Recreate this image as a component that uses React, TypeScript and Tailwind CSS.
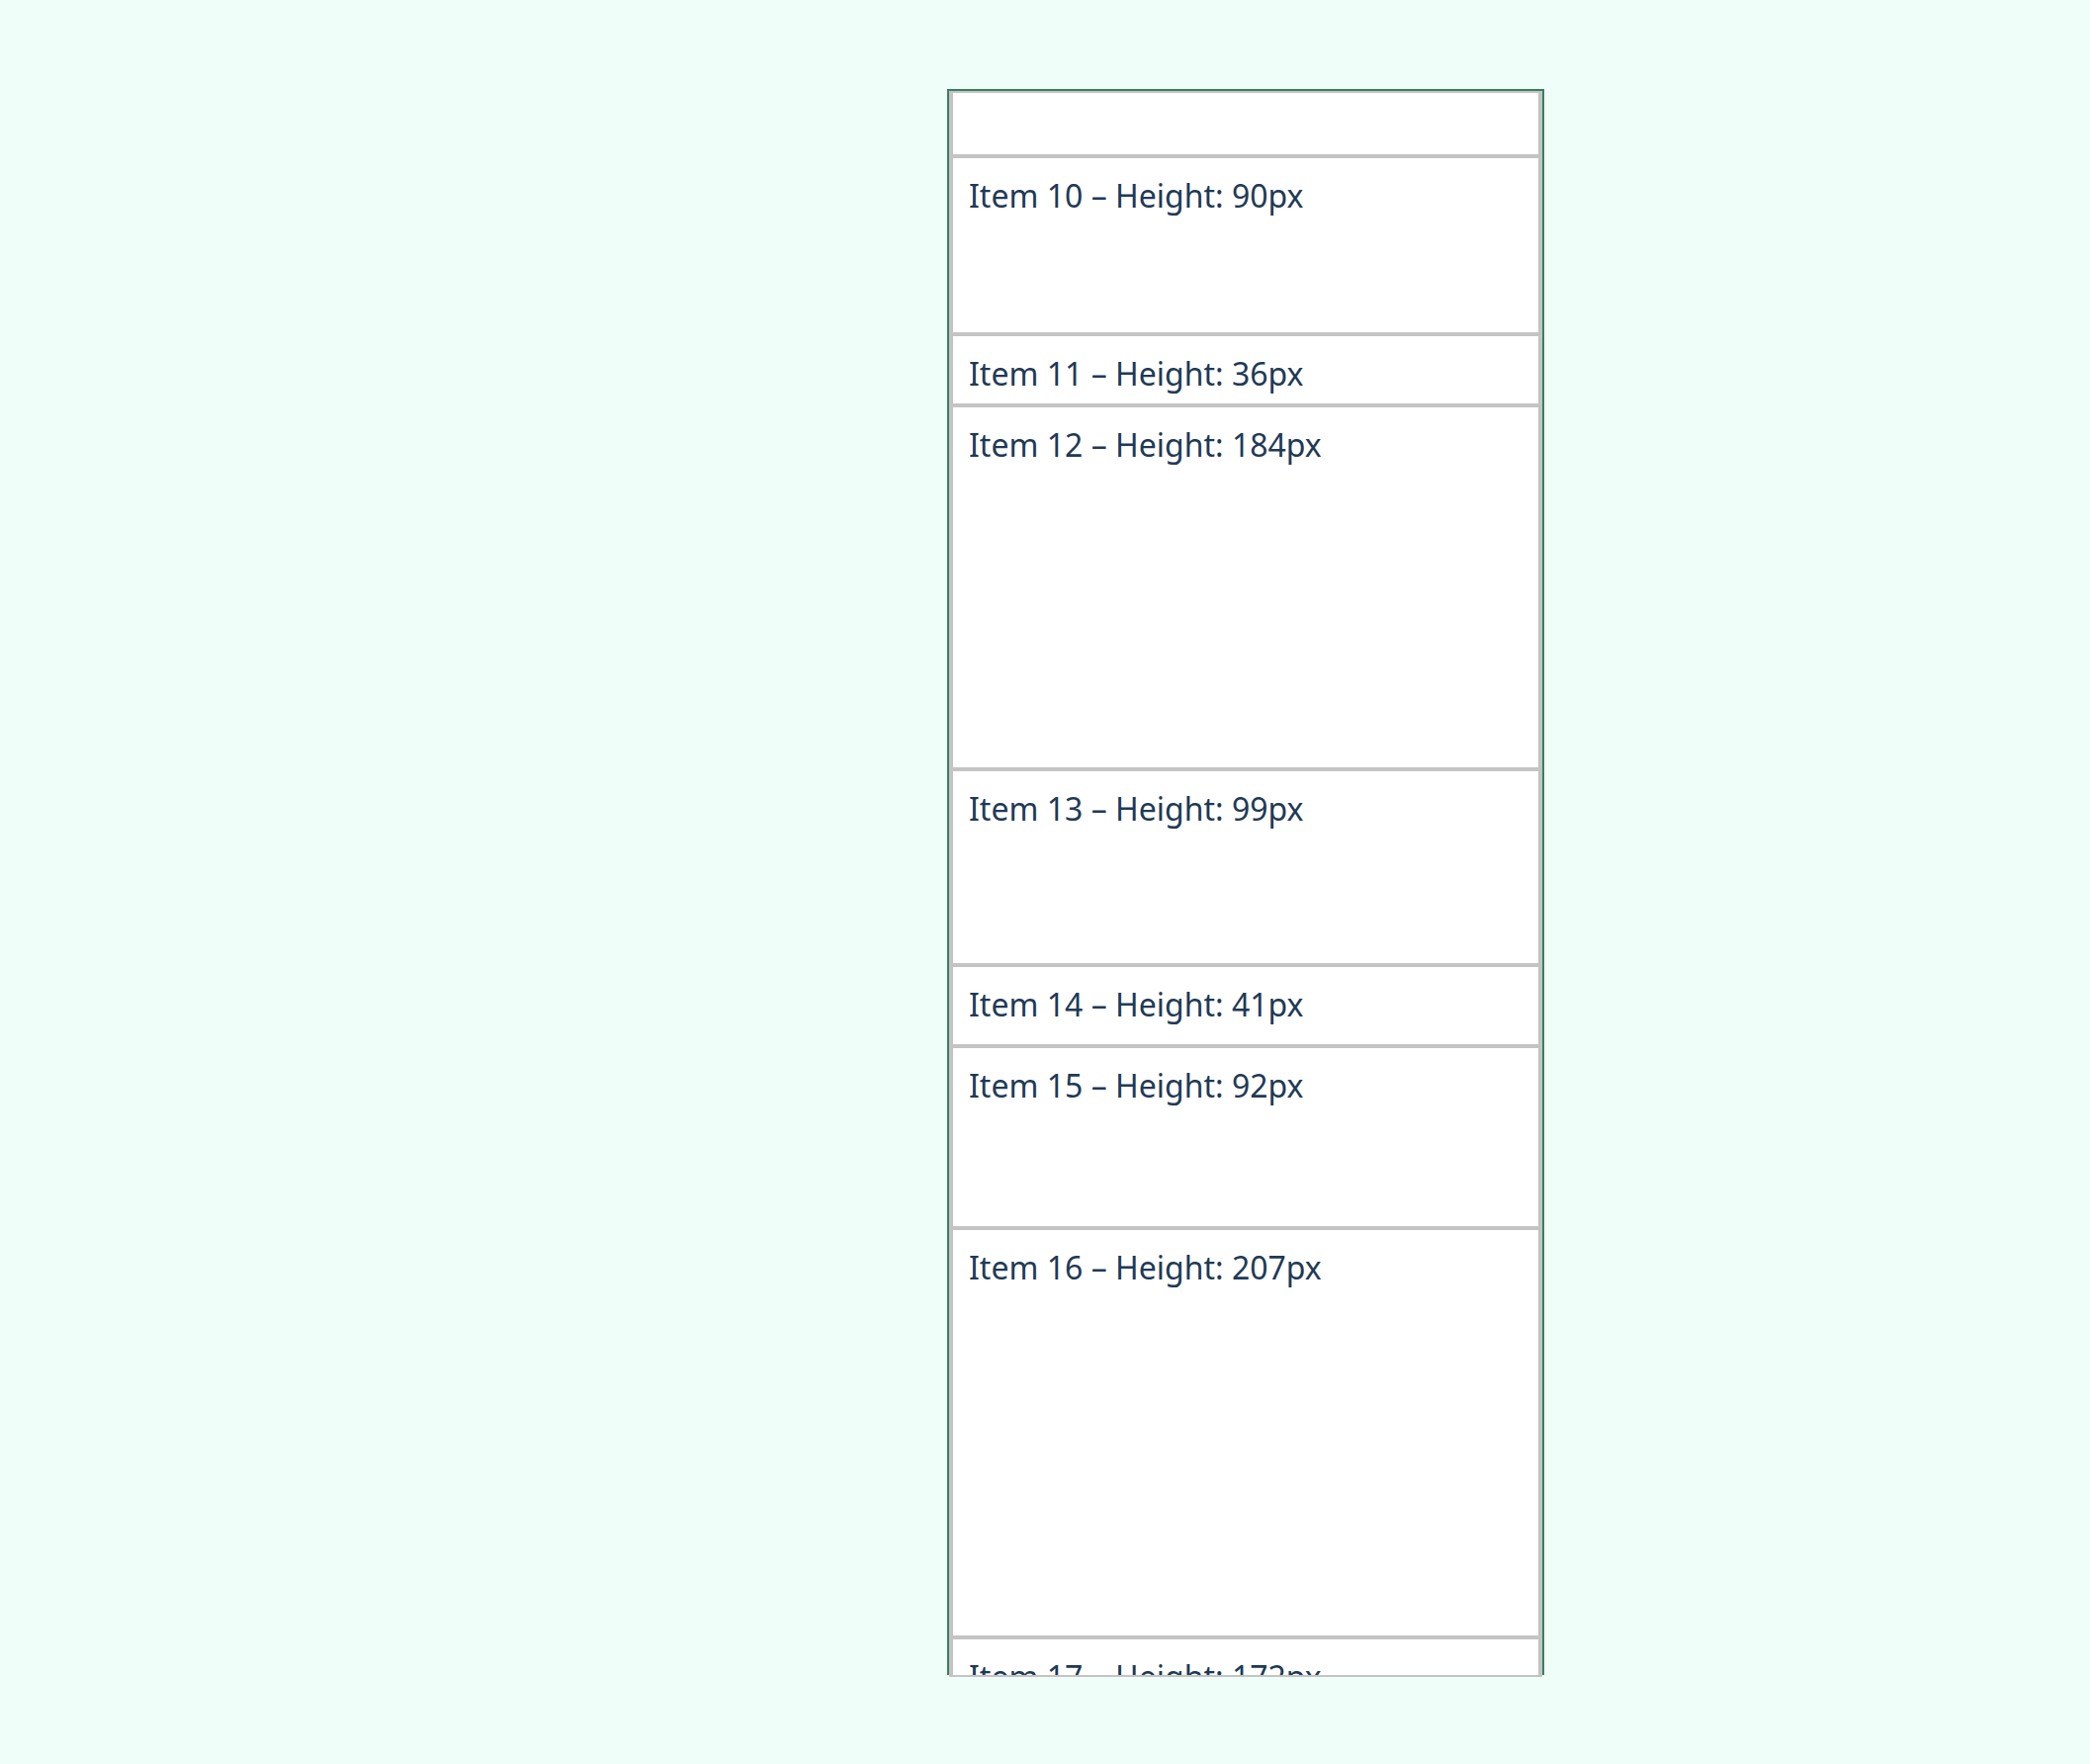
const items = [
  { id: 9, label: 140 },
  { id: 10, label: 90 },
  { id: 11, label: 36 },
  { id: 12, label: 184 },
  { id: 13, label: 99 },
  { id: 14, label: 41 },
  { id: 15, label: 92 },
  { id: 16, label: 207 },
  { id: 17, label: 172 },
];

function Row({ id, label }: { id: number; label: number }) {
  return (
    <div
      className="box-border border-2 border-[#c4c4c4] bg-white px-4 pt-[17px] text-[32px] leading-[1.3] text-[#1f3a55]"
      style={{ height: label * 2 }}
    >
      Item {id} – Height: {label}px
    </div>
  );
}

export default function App() {
  return (
    <div
      className="h-[1784px] w-full bg-[#f0fef9] pl-[958px] pt-[90px]"
      style={{ fontFamily: '"Noto Sans", "Liberation Sans", sans-serif' }}
    >
      <div className="h-[1604px] w-[604px] border-x-2 border-t-2 border-[#3b7f62]">
        {/* viewport of the virtual list, scrolled part way into item 9 */}
        <div className="box-border h-[1604px] w-[600px] overflow-hidden border-2 border-[#c4c4c4] bg-white">
          <div className="-mt-[216px]">
            {items.map((it) => (
              <Row key={it.id} id={it.id} label={it.label} />
            ))}
          </div>
        </div>
      </div>
    </div>
  );
}
